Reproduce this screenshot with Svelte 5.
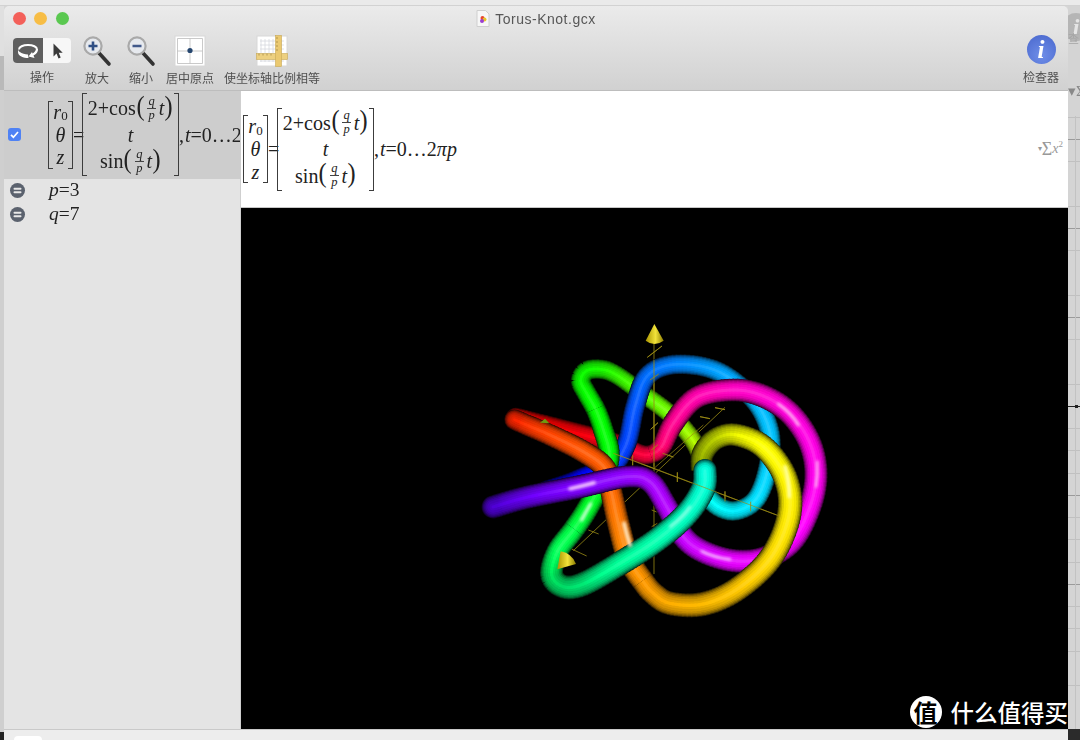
<script>
  // point: x, y, hue, width factor, light factor. First/last point of a run are tangent guides unless the end is rounded.
  const runs = [
    // red, back strand
    { start: 1, pts: [[140,325,362,.9,.9],[300,365,358,.9,.85],[440,402,352,.88,.9],[510,432,346,.82,.9],[545,432,343,.8,.92],[575,410,334,.85,1]] },
    // upper green
    { pts: [[400,360,120,.88,1],[378,300,119,.87,1],[350,250,118,.86,.95],[332,212,117,.86,.9],[350,182,116,.85,.88],[395,178,113,.84,.88],[440,195,108,.8,.9],[510,245,100,.8,.95],[600,312,92,.8,1],[665,385,78,.8,.9],[695,445,70,.8,.75],[705,480,68,.8,.7]] },
    // blue to cyan
    { pts: [[160,570,244,.9,1],[225,545,242,.9,.85],[300,520,240,.9,.9],[355,497,238,.88,1],[420,478,228,.85,1],[470,400,224,.85,1],[495,290,220,.85,1],[530,200,214,.85,.95],[600,165,210,.85,.95],[700,170,204,.85,.95],[780,205,200,.85,1],[860,280,196,.85,1],[900,370,194,.85,1],[895,470,191,.85,1],[860,565,187,.85,1],[800,602,184,.85,.9],[745,590,180,.85,.9],[700,545,176,.85,.9],[680,520,175,.85,.9]] },
    // lower green
    { pts: [[262,725,140,.95,1],[310,660,136,.95,1],[350,600,130,.95,1],[395,515,125,.92,1],[418,435,122,.9,1],[400,360,120,.88,1],[378,300,119,.87,1],[350,250,118,.86,.95]] },
    // orange to red
    { end: 1, pts: [[550,850,38,1,.9],[520,815,36,1,.95],[475,745,33,1,1],[445,640,29,.98,1],[425,550,25,.95,1],[405,475,22,.95,1],[340,425,20,.95,1],[240,375,16,.92,.95],[170,345,12,.9,.9],[136,330,8,.88,.85]] },
    // magenta to violet
    { end: 1, pts: [[510,432,346,.82,.9],[545,432,343,.8,.92],[575,410,334,.85,1],[610,340,326,.92,1],[680,262,319,.95,1],[790,240,314,.98,1],[880,258,311,1,1],[960,310,308,1,1],[1018,395,306,1,1],[1038,490,304,1,1],[1020,590,302,1,1],[965,695,298,1,.95],[880,745,296,1,1],[790,752,294,1,1],[700,725,290,1,1],[640,680,286,.98,1],[590,590,282,.95,1],[540,515,278,.95,1],[470,500,274,.95,1],[330,530,270,1,1],[170,562,266,1,.85],[72,590,262,1,.72]] },
    // yellow ring
    { pts: [[695,520,70,.95,.6],[695,478,69,.95,.6],[698,432,68,.95,.65],[735,388,66,.95,.72],[795,374,62,.98,.85],[880,410,60,1,1],[945,500,58,1.05,1],[958,610,56,1.05,1],[905,740,52,1.05,1],[805,835,47,1.05,.95],[700,882,44,1.05,.88],[600,880,41,1.02,.88],[550,850,38,1,.9],[520,815,36,1,.95],[475,745,33,1,1]] },
    // teal to green
    { start: 1, pts: [[705,485,172,1.02,1],[700,535,170,1.05,1],[650,612,166,1.05,1],[560,690,161,1.05,1],[450,760,156,1.05,.95],[340,822,150,1.05,.8],[280,830,148,1.02,.75],[245,795,144,1,.8],[262,725,140,.95,1],[310,660,136,.95,1],[350,600,130,.95,1]] }
  ];

  const layers = [
    [69, 9], [65, 19], [60, 28], [53, 36], [45, 43], [35, 48], [21, 52], [9, 57]
  ];

  function sample(run) {
    const pts = run.pts, out = [];
    const from = run.start ? 0 : 1, to = pts.length - 1 - (run.end ? 0 : 1);
    for (let i = from; i < to; i++) {
      const p0 = pts[Math.max(i - 1, 0)], p1 = pts[i], p2 = pts[i + 1], p3 = pts[Math.min(i + 2, pts.length - 1)];
      const n = Math.max(3, Math.ceil(Math.hypot(p2[0] - p1[0], p2[1] - p1[1]) / 12));
      for (let k = 0; k < n; k++) {
        const t = k / n, t2 = t * t, t3 = t2 * t;
        const f = (a, b, c, d) => 0.5 * (2 * b + (c - a) * t + (2 * a - 5 * b + 4 * c - d) * t2 + (3 * b - a - 3 * c + d) * t3);
        const lerp = (j) => p1[j] + (p2[j] - p1[j]) * t;
        out.push({ x: f(p0[0], p1[0], p2[0], p3[0]), y: f(p0[1], p1[1], p2[1], p3[1]), h: lerp(2), k: lerp(3), f: lerp(4) });
      }
    }
    const last = pts[to];
    out.push({ x: last[0], y: last[1], h: last[2], k: last[3], f: last[4] });
    return out;
  }

  function buildTube(run) {
    const s = sample(run);
    const segs = [];
    for (let i = 0; i < s.length - 1; i++) {
      const a = s[i], b = s[i + 1];
      const len = Math.hypot(b.x - a.x, b.y - a.y) || 1;
      const ex = ((b.x - a.x) / len) * 3, ey = ((b.y - a.y) / len) * 3;
      const first = i === 0, final = i === s.length - 2;
      segs.push({
        x1: a.x - ex, y1: a.y - ey,
        x2: b.x + ex, y2: b.y + ey,
        h: a.h, k: a.k, f: a.f,
        cap: (first && run.start) || (final && run.end) ? 'round' : 'butt'
      });
    }
    return layers.map(([w, l]) => ({ w, l, segs }));
  }

  const tubes = runs.map(buildTube);

  const specs = [
    ['M300 536 Q335 528 372 518', '#f6c8ff', 11],
    ['M462 640 Q470 675 480 705', '#ffe6c0', 12],
    ['M335 630 Q350 602 362 582', '#c8ffd0', 10],
    ['M925 282 Q962 308 985 345', '#ffc0f4', 8],
    ['M1042 455 Q1044 495 1038 530', '#ffc0f4', 7],
    ['M945 470 Q958 510 958 560', '#ffffb0', 10],
    ['M695 724 Q730 742 780 748', '#f8c0ff', 8],
    ['M600 650 Q640 620 660 590', '#b8fff0', 6]
  ];

  const vTicks = [[532,142,576,108],[540,210,566,192],[542,358,564,338],[544,420,564,404],[545,600,560,606],[545,650,562,640]];
  const xTicks = [[488,436,488,466],[622,487,622,516],[765,544,765,574],[842,575,842,604]];
  const zTicks = [[735,293,765,299],[690,320,720,326],[578,430,610,441],[405,606,436,620],[355,660,386,672],[285,708,350,738]];
</script>

{#snippet formula()}
  <div class="formula">
    <div class="mat vec">
      <i class="br l"></i>
      <div class="rows">
        <div class="cell"><em>r</em><sub>0</sub></div>
        <div class="cell"><em>θ</em></div>
        <div class="cell"><em>z</em></div>
      </div>
      <i class="br r"></i>
    </div>
    <span class="eq">=</span>
    <div class="mat big">
      <i class="br l"></i>
      <div class="rows">
        <div class="cell tall">2+cos<span class="par">(</span>{@render frac()}<em>t</em><span class="par">)</span></div>
        <div class="cell"><em>t</em></div>
        <div class="cell tall">sin<span class="par">(</span>{@render frac()}<em>t</em><span class="par">)</span></div>
      </div>
      <i class="br r"></i>
    </div>
    <span class="tail">,<em class="tt">t</em>=0…2<em>π</em><em>p</em></span>
  </div>
{/snippet}

{#snippet frac()}
  <span class="frac"><em class="num">q</em><em class="den">p</em></span>
{/snippet}

{#snippet minus()}
  <svg class="minus" width="17" height="17" viewBox="0 0 17 17">
    <circle cx="8.5" cy="8.5" r="7.5" fill="#5b626e" />
    <rect x="4.5" y="5.8" width="8" height="1.9" rx=".9" fill="#e8e8e8" />
    <rect x="4.5" y="9.3" width="8" height="1.9" rx=".9" fill="#e8e8e8" />
  </svg>
{/snippet}

<div class="page">
  <div class="back-top"></div>
  <div class="back-left"></div>

  <div class="window">
    <header class="toolbar">
      <div class="titlebar">
        <div class="lights">
          <i class="light red"></i><i class="light yellow"></i><i class="light green"></i>
        </div>
        <div class="title">
          <svg width="14" height="17" viewBox="0 0 14 17">
            <path d="M1 .5h8.5L13 4v12.5H1z" fill="#f7f7f7" stroke="#cfcfcf" />
            <circle cx="6.5" cy="8" r="2" fill="#e8452c" />
            <circle cx="8.5" cy="9.5" r="2" fill="#e6c52a" />
            <circle cx="6" cy="11" r="2" fill="#9a3fd0" />
          </svg>
          <span>Torus-Knot.gcx</span>
        </div>
      </div>
      <div class="tools">
        <div class="tool t1">
          <div class="seg">
            <span class="seg-on">
              <svg width="24" height="18" viewBox="0 0 24 18">
                <path d="M3 7.500C3 4.800 7 3 12 3s9 1.800 9 4.500" fill="none" stroke="#fff" stroke-width="2" />
                <path d="M2 7c0 1 .5 2 1.500 2.800C6 11.800 9 12.500 12 12.500l.5 3.500c-5 0-10.500-2-10.500-6z" fill="#fff" />
                <path d="M22 7c.4 2.500-1.500 5-4.500 6.500l1 2.500-6-1.500 3.500-4.500 .6 1.500c1.500-.8 3-2.500 3.400-4.500z" fill="#fff" />
              </svg>
            </span>
            <span class="seg-off">
              <svg width="12" height="18" viewBox="0 0 12 18"><path d="M2.500 1.500v13l3-3 2 5 2.200-1-2-4.700h4z" fill="#3a3a3a" /></svg>
            </span>
          </div>
          <span class="label">操作</span>
        </div>
        <div class="tool t2">
          <svg width="32" height="32" viewBox="0 0 32 32">
            <line x1="18" y1="18" x2="28" y2="29" stroke="#333" stroke-width="3.6" stroke-linecap="round" />
            <circle cx="12" cy="11" r="8.600" fill="#e6e9ee" stroke="#a9a9a9" stroke-width="2.2" />
            <path d="M12 6.500v9M7.500 11h9" stroke="#2f4f85" stroke-width="2.600" />
          </svg>
          <span class="label">放大</span>
        </div>
        <div class="tool t3">
          <svg width="32" height="32" viewBox="0 0 32 32">
            <line x1="18" y1="18" x2="28" y2="29" stroke="#333" stroke-width="3.600" stroke-linecap="round" />
            <circle cx="12" cy="11" r="8.600" fill="#e6e9ee" stroke="#a9a9a9" stroke-width="2.200" />
            <path d="M7.500 11h9" stroke="#41598a" stroke-width="2.600" />
          </svg>
          <span class="label">缩小</span>
        </div>
        <div class="tool t4">
          <svg width="32" height="32" viewBox="0 0 32 32">
            <rect x="1" y="1" width="30" height="30" fill="#fff" stroke="#d8d8d8" />
            <path d="M3.500 3.500h25v25h-25zM16 3.500v25M3.500 16h25" fill="none" stroke="#bcbcbc" stroke-width=".8" />
            <circle cx="16" cy="15.500" r="2.600" fill="#25466f" />
          </svg>
          <span class="label">居中原点</span>
        </div>
        <div class="tool t5">
          <svg width="32" height="32" viewBox="0 0 32 32">
            <rect x="1" y="1" width="30" height="30" fill="#fff" stroke="#d8d8d8" />
            <path d="M5 4v23M9 4v23M13 4v23M17 4v23M21 4v23M25 4v23M4 6h24M4 10h24M4 14h24M4 22h24M4 26h24" stroke="#d5d8de" stroke-width=".8" />
            <rect x=".5" y="18.500" width="31" height="6" fill="#edd080" stroke="#c9a956" stroke-width=".6" />
            <rect x="19.500" y=".5" width="6" height="31" fill="#ebc970" stroke="#c9a956" stroke-width=".6" />
            <path d="M3 18.500v2M7 18.500v2M11 18.500v2M15 18.500v2M20 3h2M20 7h2M20 11h2M20 15h2" stroke="#a48a45" stroke-width=".8" />
          </svg>
          <span class="label">使坐标轴比例相等</span>
        </div>
        <div class="grow"></div>
        <div class="tool t6">
          <div class="info"><span>i</span></div>
          <span class="label">检查器</span>
        </div>
      </div>
    </header>

    <main class="main">
      <aside class="side">
        <div class="row sel">
          <span class="check">
            <svg width="13" height="13" viewBox="0 0 13 13"><path d="M3 6.800l2.400 2.400L10 4" fill="none" stroke="#fff" stroke-width="1.700" /></svg>
          </span>
          {@render formula()}
        </div>
        <div class="row var">{@render minus()}<span class="vtext"><em>p</em>=3</span></div>
        <div class="row var">{@render minus()}<span class="vtext"><em>q</em>=7</span></div>
      </aside>

      <section class="content">
        <div class="strip">
          {@render formula()}
          <span class="sum"><b>▾</b>Σ<em>x</em><sup>2</sup></span>
        </div>
        <div class="canvas">
          <svg class="scene" viewBox="241 208 827 521" width="827" height="521">
            <defs>
              <linearGradient id="cone" x1="0" x2="1" y1="0" y2="0">
                <stop offset="0" stop-color="#a89400" /><stop offset=".55" stop-color="#f2e33a" /><stop offset="1" stop-color="#8a7a00" />
              </linearGradient>
              <filter id="soft" x="-40%" y="-40%" width="180%" height="180%"><feGaussianBlur stdDeviation="4.500" /></filter>
            </defs>
            <g transform="translate(470 310) scale(.33333)">
              <g stroke="#8d7f12" stroke-width="2.600">
                <line x1="552" y1="95" x2="552" y2="792" />
                <line x1="430" y1="430" x2="1002" y2="646" />
                <line x1="765" y1="292" x2="310" y2="722" />
                {#each [...vTicks, ...xTicks, ...zTicks] as t}
                  <line x1={t[0]} y1={t[1]} x2={t[2]} y2={t[3]} />
                {/each}
              </g>
              {#each tubes as tube}
                <g fill="none">
                  {#each tube as layer}
                    {#each layer.segs as s}
                      <line x1={s.x1} y1={s.y1} x2={s.x2} y2={s.y2} stroke-width={layer.w * s.k} stroke-linecap={s.cap} stroke={`hsl(${s.h} 100% ${layer.l * s.f}%)`} />
                    {/each}
                  {/each}
                </g>
              {/each}
              <g fill="none" stroke-linecap="round" filter="url(#soft)">
                {#each specs as s}
                  <path d={s[0]} stroke={s[1]} stroke-width={s[2]} />
                {/each}
              </g>
              <g stroke="#9a8a14" stroke-width="2.600">
                <line x1="552" y1="150" x2="552" y2="470" />
                <line x1="552" y1="475" x2="430" y2="430" />
                <line x1="552" y1="475" x2="925" y2="617" opacity=".75" />
                <line x1="552" y1="475" x2="700" y2="345" opacity=".8" />
                {#each vTicks.slice(0, 4) as t}
                  <line x1={t[0]} y1={t[1]} x2={t[2]} y2={t[3]} />
                {/each}
                {#each xTicks as t}
                  <line x1={t[0]} y1={t[1]} x2={t[2]} y2={t[3]} />
                {/each}
                {#each zTicks.slice(0, 3) as t}
                  <line x1={t[0]} y1={t[1]} x2={t[2]} y2={t[3]} />
                {/each}
              </g>
              <path d="M553 42L527 92Q553 112 581 92Z" fill="url(#cone)" />
              <path d="M262 778L272 724Q306 730 318 762Z" fill="url(#cone)" />
              <path d="M210 338L225 326L238 340Z" fill="#6f9a10" />
            </g>
          </svg>
          <div class="mark">
            <span class="mark-badge">值</span>
            <span class="mark-text">什么值得买</span>
          </div>
        </div>
      </section>
    </main>
  </div>

  <div class="back-right">
    <div class="ghost-i"><span>i</span></div>
    <span class="ghost-l">查</span>
    <span class="ghost-s">▾Σ</span>
    <div class="grid-lines"></div>
    <div class="axis"></div>
  </div>

  <div class="bottom-left"></div>
  <div class="bottom"><i class="tab"></i></div>
  <div class="bottom-right"></div>
</div>

<style>
  :global(body) { margin: 0; background: #d6d6d6; }
  .page {
    width: 1080px; height: 740px; overflow: hidden;
    display: grid;
    grid-template-columns: 4px 1064px 12px;
    grid-template-rows: 6px 723px 11px;
    font-family: "Liberation Sans", "Noto Sans CJK SC", sans-serif;
    filter: blur(.35px);
  }
  .back-top { grid-column: 1 / 4; grid-row: 1; background: #eaeaea; border-bottom: 1px solid #d2d2d2; box-sizing: border-box; }
  .back-left { grid-column: 1; grid-row: 2; background: linear-gradient(#e0e0e0 0 50px, #b9b9b9 50px 84px, #cfcfcf 84px); }
  .window { grid-column: 2; grid-row: 2; display: flex; flex-direction: column; min-height: 0; border-radius: 5px 5px 0 0; overflow: hidden; }

  .toolbar { height: 85px; box-sizing: border-box; background: linear-gradient(#ebebeb, #d1d1d1); border-bottom: 1px solid #bdbdbd; display: flex; flex-direction: column; }
  .titlebar { height: 25px; flex: none; display: grid; grid-template-columns: 1fr auto 1fr; align-items: center; }
  .lights { display: flex; gap: 8.5px; padding-left: 8.500px; }
  .light { width: 13px; height: 13px; border-radius: 50%; }
  .red { background: #f3605a; }
  .yellow { background: #f7bd45; }
  .green { background: #5ac850; }
  .title { display: flex; align-items: center; gap: 5px; font-size: 14px; letter-spacing: .5px; color: #575757; grid-column: 2; }
  .tools { display: flex; padding-left: 8px; flex: 1; min-height: 0; }
  .tool { display: flex; flex-direction: column; align-items: center; flex: none; }
  .tool svg { display: block; }
  .t1 { width: 60px; }
  .t2 { width: 50px; }
  .t3 { width: 38px; }
  .t4 { width: 60px; }
  .t5 { width: 104px; }
  .t6 { width: 54px; }
  .grow { flex: 1; }
  .t2, .t3, .t4, .t5 { height: 100%; }
  .tool > svg { height: 32px; margin-top: 4px; }
  .tool .label { margin-top: 3px; font-size: 12px; line-height: 15px; color: #4f4f4f; white-space: nowrap; font-family: "Noto Sans CJK SC", sans-serif; }
  .t1 .label { margin-top: 6px; }
  .t6 .label { margin-top: 5px; }
  .seg { display: flex; width: 58px; height: 25px; margin-top: 7px; border-radius: 4px; overflow: hidden; background: #f7f7f7; }
  .seg-on { width: 30px; background: #5f5f5f; display: flex; align-items: center; justify-content: center; }
  .seg-off { flex: 1; display: flex; align-items: center; justify-content: center; }
  .info { width: 29px; height: 29px; margin-top: 4px; border-radius: 50%; background: radial-gradient(circle at 50% 70%, #6f8ee8, #4866cc); display: flex; align-items: center; justify-content: center; }
  .info span { color: #fff; font: italic bold 25px/1 "Liberation Serif", serif; }

  .main { flex: 1; min-height: 0; display: flex; }
  .side { width: 237px; flex: none; background: #e4e4e4; overflow: hidden; border-right: 1px solid #cfcfcf; box-sizing: border-box; }
  .row { display: flex; align-items: center; }
  .sel { height: 88px; background: #cdcdcd; padding-left: 4px; overflow: hidden; padding-bottom: 1px; box-sizing: border-box; }
  .check { width: 13px; height: 13px; flex: none; border-radius: 3px; background: #4f82f4; display: block; margin-right: 27px; }
  .check svg { display: block; }
  .var { height: 24px; padding-left: 5px; padding-bottom: 2px; box-sizing: border-box; }
  .vtext { margin-left: 23px; font: 19.500px/22px "Liberation Serif", serif; color: #222; }
  .minus { flex: none; }
  em { font-style: italic; }

  .formula { display: flex; align-items: center; flex: none; font: 20px/1 "Liberation Serif", serif; color: #222; white-space: nowrap; }
  .mat { display: flex; align-items: stretch; }
  .br { width: 4px; flex: none; border: 1.300px solid #3c3c3c; display: block; }
  .br.l { border-right: 0; }
  .br.r { border-left: 0; }
  .rows { display: flex; flex-direction: column; align-items: center; justify-content: space-between; }
  .cell { display: flex; align-items: center; height: 23px; justify-content: center; }
  .cell.tall { height: 30px; }
  .vec .rows { width: 15px; height: 68px; }
  .big .rows { width: 87px; height: 83px; }
  .vec sub { font-size: 13px; line-height: 1; align-self: flex-end; margin-bottom: 1px; }
  .eq { width: 9px; text-align: center; font-size: 20px; }
  .par { font-size: 27px; line-height: 1; font-weight: 400; transform: translateY(-2px) scaleX(.9); }
  .frac { display: inline-flex; flex-direction: column; align-items: center; width: 14px; font-size: 12.500px; line-height: 13px; }
  .num { border-bottom: .8px solid #444; width: 9px; text-align: center; }
  .den { line-height: 13px; }
  .tail { display: inline-block; }
  .tt { margin-left: 1px; }

  .content { flex: 1; min-width: 0; display: flex; flex-direction: column; }
  .strip { height: 117px; flex: none; box-sizing: border-box; background: #fff; border-bottom: 1px solid #c6c6c6; display: flex; align-items: center; padding-left: 2px; }
  .sum { margin-left: auto; padding-right: 5px; display: flex; align-items: center; color: #999; font: 18px/1 "Liberation Serif", serif; }
  .sum b { font-size: 8px; font-weight: 400; }
  .sum em { font-size: 14px; }
  .sum sup { font-size: 9px; align-self: flex-start; }
  .canvas { flex: 1; min-height: 0; position: relative; background: #000; }
  .scene { display: block; }
  .mark { position: absolute; right: 0; bottom: 1px; display: flex; align-items: center; gap: 9px; }
  .mark-badge { width: 32px; height: 32px; border-radius: 50%; background: #fff; color: #000; font: 700 24px/32px "Noto Sans CJK SC", sans-serif; text-align: center; }
  .mark-text { color: #fff; font: 500 23.500px/32px "Noto Sans CJK SC", sans-serif; white-space: nowrap; }

  .back-right { grid-column: 3; grid-row: 2; position: relative; background: #d4d4d4; overflow: hidden; }
  .ghost-i { position: absolute; left: -6px; top: 7px; width: 28px; height: 28px; border-radius: 50%; background: #b5b5b5; display: flex; align-items: center; justify-content: center; }
  .ghost-i span { color: #e5e5e5; font: italic bold 24px/1 "Liberation Serif", serif; }
  .ghost-l { position: absolute; left: 0; top: 25px; font: 11px/14px "Noto Sans CJK SC", sans-serif; color: #a4a4a4; }
  .ghost-s { position: absolute; left: 0; top: 77px; font: 15px/16px "Liberation Serif", serif; color: #888; white-space: nowrap; }
  .grid-lines {
    position: absolute; left: 0; right: 0; top: 110px; bottom: 0;
    background:
      linear-gradient(90deg, transparent 7px, #c2c2c2 7px 8px, transparent 8px),
      repeating-linear-gradient(transparent 0 88px, #9a9a9a 88px 89px),
      repeating-linear-gradient(transparent 0 21.250px, #c0c0c0 21.250px 22.250px);
    background-position: 0 0, 0 -65px, 0 -65px;
  }
  .axis { position: absolute; left: 0; right: 0; top: 400px; height: 1px; background: #222; }
  .axis::after { content: ""; position: absolute; left: 7px; top: -1px; width: 3px; height: 3px; background: #222; }
  .bottom-left { grid-column: 1; grid-row: 3; background: linear-gradient(#cfcfcf 0 3px, #222 3px); }
  .bottom { grid-column: 2; grid-row: 3; background: #ededed; border-top: 1px solid #c9c9c9; box-sizing: border-box; padding-left: 10px; padding-top: 6px; overflow: hidden; }
  .tab { display: block; width: 28px; height: 10px; background: #fff; border-radius: 4px 4px 0 0; }
  .bottom-right { grid-column: 3; grid-row: 3; background: #2b2b2b; }
</style>
